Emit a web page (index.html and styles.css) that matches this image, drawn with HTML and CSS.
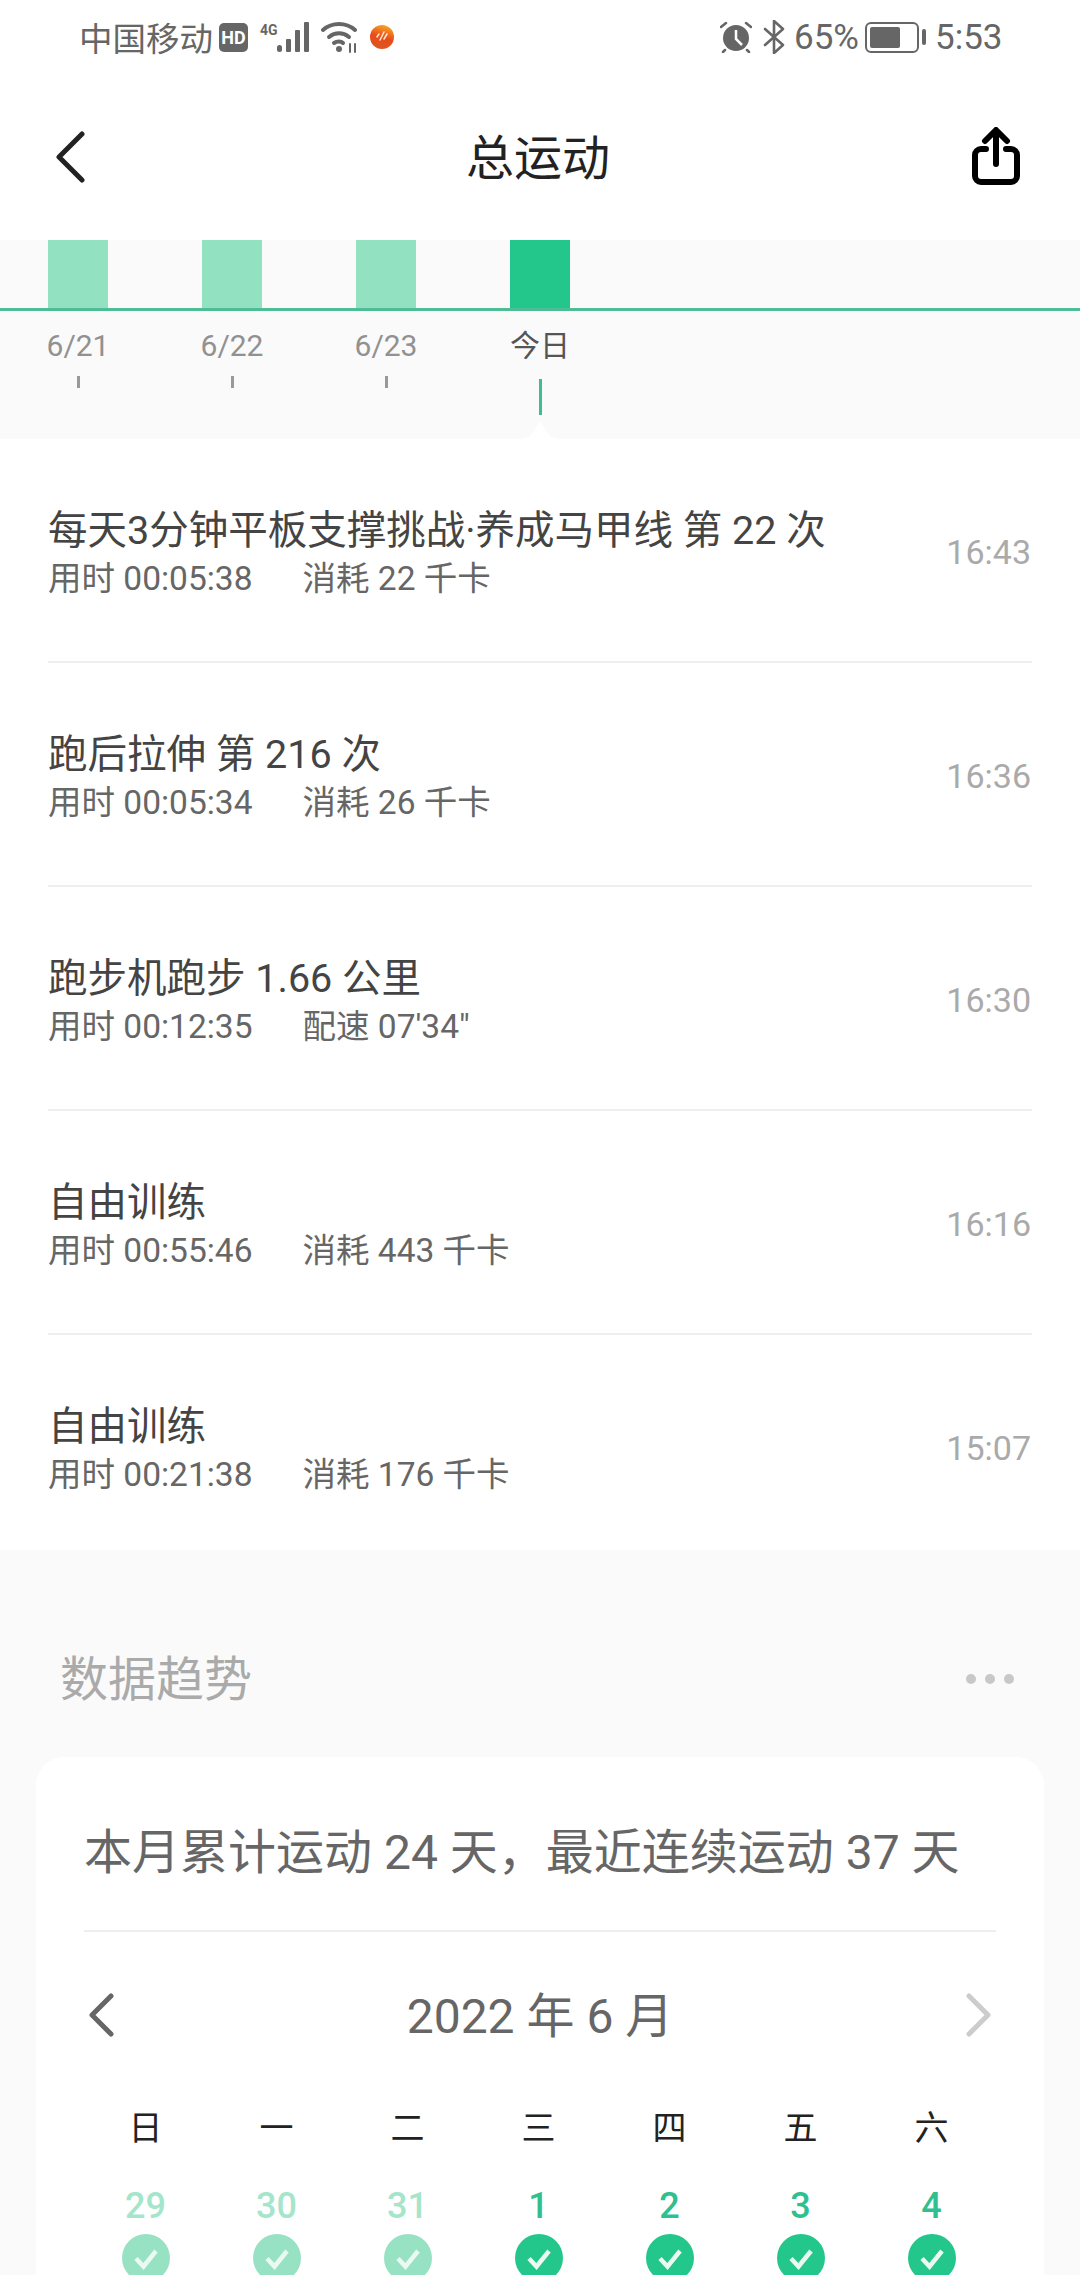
FILE: index.html
```html
<!DOCTYPE html>
<html>
<head>
    <meta charset="utf-8">
    <title>总运动</title>
    <link rel="stylesheet" href="styles.css">
</head>
<body>
    <svg class="defs" width="0" height="0">
        <symbol id="tick" viewBox="0 0 48 48">
            <circle cx="24" cy="24" r="24" fill="currentColor"/>
            <path d="M14 24.5l7.5 8L34 17" fill="none" stroke="#eafaf3" stroke-width="4.5"/>
        </symbol>
    </svg>

    <div class="status-bar">
        <span class="carrier">中国移动</span>
        <span class="hd">HD</span>
        <span class="net">4G</span>
        <svg class="signal" width="33" height="30" viewBox="0 0 33 30" fill="#666">
            <rect x="0" y="23" width="5" height="7" rx="2.5"/>
            <rect x="9" y="17" width="5" height="13" rx="1"/>
            <rect x="18" y="8" width="5" height="22" rx="1"/>
            <rect x="27" y="0" width="5" height="30" rx="1"/>
        </svg>
        <svg class="wifi" width="37" height="32" viewBox="0 0 37 32" fill="none" stroke="#666" stroke-width="4" stroke-linecap="round">
            <path d="M2 9C11 1 25 1 34 9"/>
            <path d="M8 16c6-5 14-5 20 0"/>
            <path d="M13 22c3-2 7-2 9 0"/>
            <circle cx="18" cy="28" r="3" fill="#666" stroke="none"/>
            <path d="M29 23v8M34 23v8" stroke-width="2"/>
        </svg>
        <svg class="app-dot" width="24" height="24" viewBox="0 0 24 24">
            <defs>
                <linearGradient id="dot" x1="0.6" y1="0" x2="0.3" y2="1">
                    <stop offset="0" stop-color="#f5a623"/>
                    <stop offset="0.5" stop-color="#ea4a1c"/>
                    <stop offset="1" stop-color="#d9591f"/>
                </linearGradient>
            </defs>
            <circle cx="12" cy="12" r="12" fill="url(#dot)"/>
            <path d="M7 12l2-3M10 15l4-8M14 14l3-5" stroke="#ffe9d0" stroke-width="1.5" stroke-linecap="round"/>
        </svg>
        <span class="status-gap"></span>
        <svg class="alarm" width="32" height="32" viewBox="0 0 32 32">
            <circle cx="16" cy="17" r="13" fill="#666"/>
            <path d="M16 9v9l6 6" fill="none" stroke="#fff" stroke-width="2.5"/>
            <path d="M1 6l5-4M31 6l-5-4M5 29l-2 2M27 29l2 2" stroke="#666" stroke-width="2.5" stroke-linecap="round"/>
        </svg>
        <svg class="bt" width="22" height="34" viewBox="0 0 22 34" fill="none" stroke="#666" stroke-width="2.6" stroke-linejoin="round" stroke-linecap="round">
            <path d="M2 9l18 16-9 8V1l9 8L2 25"/>
        </svg>
        <span class="battery-text">65%</span>
        <span class="battery"><span class="battery-fill"></span></span>
        <span class="battery-cap"></span>
        <span class="clock">5:53</span>
    </div>

    <div class="nav">
        <svg class="back" width="29" height="52" viewBox="0 0 29 52" fill="none" stroke="#222" stroke-width="5" stroke-linecap="round" stroke-linejoin="round">
            <path d="M26 3L3 26l23 23"/>
        </svg>
        <div class="nav-title">总运动</div>
        <svg class="share" width="48" height="58" viewBox="0 0 48 58" fill="none" stroke="#000" stroke-width="6" stroke-linecap="round" stroke-linejoin="round">
            <path d="M24 37V4M13 14L24 3l11 11"/>
            <path d="M14 22H9a6 6 0 0 0-6 6v21a6 6 0 0 0 6 6h30a6 6 0 0 0 6-6V28a6 6 0 0 0-6-6h-5"/>
        </svg>
    </div>

    <div class="chart">
        <div class="bars">
            <div class="bar"></div>
            <div class="bar"></div>
            <div class="bar"></div>
            <div class="bar bar-today"></div>
        </div>
        <div class="days">
            <div class="day"><span>6/21</span><i class="mark"></i></div>
            <div class="day"><span>6/22</span><i class="mark"></i></div>
            <div class="day"><span>6/23</span><i class="mark"></i></div>
            <div class="day day-today"><span>今日</span><i class="mark"></i></div>
        </div>
        <svg class="notch" width="44" height="18" viewBox="0 0 44 18">
            <path d="M0 18c8 0 12-2 16-9l6-9 6 9c4 7 8 9 16 9z" fill="#fff"/>
        </svg>
    </div>

    <div class="list">
        <div class="row">
            <div class="row-text">
                <div class="row-title">每天3分钟平板支撑挑战·养成马甲线 第 22 次</div>
                <div class="row-sub"><span>用时 00:05:38</span><span>消耗 22 千卡</span></div>
            </div>
            <div class="row-time">16:43</div>
        </div>
        <div class="row">
            <div class="row-text">
                <div class="row-title">跑后拉伸 第 216 次</div>
                <div class="row-sub"><span>用时 00:05:34</span><span>消耗 26 千卡</span></div>
            </div>
            <div class="row-time">16:36</div>
        </div>
        <div class="row">
            <div class="row-text">
                <div class="row-title">跑步机跑步 1.66 公里</div>
                <div class="row-sub"><span>用时 00:12:35</span><span>配速 07'34"</span></div>
            </div>
            <div class="row-time">16:30</div>
        </div>
        <div class="row">
            <div class="row-text">
                <div class="row-title">自由训练</div>
                <div class="row-sub"><span>用时 00:55:46</span><span>消耗 443 千卡</span></div>
            </div>
            <div class="row-time">16:16</div>
        </div>
        <div class="row">
            <div class="row-text">
                <div class="row-title">自由训练</div>
                <div class="row-sub"><span>用时 00:21:38</span><span>消耗 176 千卡</span></div>
            </div>
            <div class="row-time">15:07</div>
        </div>
    </div>

    <div class="trend">
        <div class="trend-head">
            <div class="trend-title">数据趋势</div>
            <div class="more"><i></i><i></i><i></i></div>
        </div>
        <div class="card">
            <div class="card-title">本月累计运动 24 天，最近连续运动 37 天</div>
            <div class="month">
                <svg width="26" height="44" viewBox="0 0 26 44" fill="none" stroke="#666" stroke-width="5" stroke-linecap="round" stroke-linejoin="round">
                    <path d="M23 3L4 22l19 19"/>
                </svg>
                <div class="month-name">2022 年 6 月</div>
                <svg width="26" height="44" viewBox="0 0 26 44" fill="none" stroke="#ccc" stroke-width="5" stroke-linecap="round" stroke-linejoin="round">
                    <path d="M3 3l19 19L3 41"/>
                </svg>
            </div>
            <div class="calendar">
                <div class="weekday">日</div>
                <div class="weekday">一</div>
                <div class="weekday">二</div>
                <div class="weekday">三</div>
                <div class="weekday">四</div>
                <div class="weekday">五</div>
                <div class="weekday">六</div>
                <div class="date date-old">29<svg><use href="#tick"/></svg></div>
                <div class="date date-old">30<svg><use href="#tick"/></svg></div>
                <div class="date date-old">31<svg><use href="#tick"/></svg></div>
                <div class="date">1<svg><use href="#tick"/></svg></div>
                <div class="date">2<svg><use href="#tick"/></svg></div>
                <div class="date">3<svg><use href="#tick"/></svg></div>
                <div class="date">4<svg><use href="#tick"/></svg></div>
            </div>
        </div>
    </div>
</body>
</html>
```

FILE: styles.css
```css
html, body {
    margin: 0;
    height: 2275px;
    overflow: hidden;
}
body {
    width: 1080px;
    background-color: #fff;
    font-family: Roboto, "Noto Sans CJK SC", sans-serif;
    color: #333;
}
.defs {
    position: absolute;
}

/* status bar */
.status-bar {
    height: 74px;
    padding-left: 79px;
    display: flex;
    align-items: center;
    color: #666;
    font-size: 35px;
}
.carrier {
    width: 140px;
    margin-top: -2px;
    font-size: 33.5px;
}
.hd {
    width: 29px;
    height: 29px;
    border-radius: 5px;
    background-color: #666;
    color: #fff;
    font-size: 18px;
    font-weight: 700;
    line-height: 29px;
    text-align: center;
}
.net {
    width: 28px;
    margin: -14px 0 0 12px;
    font-size: 14px;
    font-weight: 700;
}
.signal {
    margin-left: -11px;
}
.wifi {
    margin-left: 11px;
}
.app-dot {
    margin-left: 12px;
}
.status-gap {
    width: 326px;
}
.bt {
    margin-left: 11px;
}
.battery-text {
    width: 64px;
    margin-left: 9px;
}
.battery {
    width: 44px;
    height: 21px;
    margin-left: 7px;
    padding: 3px;
    border: 2px solid #666;
    border-radius: 6px;
}
.battery-fill {
    display: block;
    width: 30px;
    height: 21px;
    border-radius: 2px;
    background-color: #666;
}
.battery-cap {
    width: 4px;
    height: 16px;
    margin-left: 3px;
    border-radius: 2px;
    background-color: #666;
}
.clock {
    margin-left: 9px;
}

/* title row */
.nav {
    height: 166px;
    display: grid;
    grid-template-columns: 1fr auto 1fr;
    align-items: center;
    padding: 0 60px 0 56px;
}
.nav-title {
    margin-top: -6px;
    font-size: 48px;
    color: #222;
}
.share {
    justify-self: end;
    margin-top: -2px;
}

/* bars */
.chart {
    height: 199px;
    background-color: #fafafa;
    position: relative;
}
.bars {
    height: 68px;
    padding-left: 48px;
    display: flex;
    gap: 94px;
    border-bottom: 3px solid #4dbd96;
}
.bar {
    width: 60px;
    background-color: #92e1c1;
}
.bar-today {
    background-color: #23c68b;
}
.days {
    padding-left: 48px;
    display: flex;
    gap: 94px;
}
.day {
    width: 60px;
    display: flex;
    flex-direction: column;
    align-items: center;
    font-size: 30px;
    color: #919191;
}
.day span {
    height: 36px;
    margin-top: 17px;
    line-height: 36px;
    white-space: nowrap;
}
.mark {
    width: 3px;
    height: 12px;
    margin-top: 12px;
    background-color: #999;
}
.day-today {
    color: #555;
}
.day-today .mark {
    height: 36px;
    margin-top: 15px;
    background-color: #3dbd90;
}
.notch {
    position: absolute;
    left: 518px;
    bottom: 0;
}

/* workouts */
.list {
    height: 1111px;
    overflow: hidden;
}
.row {
    height: 224px;
    margin: 0 48px;
    box-sizing: border-box;
    border-bottom: 2px solid #eee;
    display: flex;
    align-items: center;
    justify-content: space-between;
}
.row-text {
    margin-top: 8px;
}
.row-title {
    font-size: 39.5px;
    line-height: 50px;
    color: #444;
}
.row-sub {
    display: flex;
    gap: 50px;
    font-size: 33.5px;
    line-height: 46px;
    color: #666;
}
.row-time {
    margin: 4px 1px 0 0;
    font-size: 34px;
    color: #aaa;
}

/* trend section */
.trend {
    height: 725px;
    background-color: #fafafa;
    overflow: hidden;
}
.trend-head {
    height: 210px;
    padding: 0 66px 52px 60px;
    margin-bottom: -3px;
    display: flex;
    align-items: flex-end;
    justify-content: space-between;
    box-sizing: border-box;
}
.trend-title {
    font-size: 48px;
    line-height: 56px;
    color: #aaa;
}
.more {
    display: flex;
    gap: 9px;
    margin-bottom: 24px;
}
.more i {
    width: 10px;
    height: 10px;
    border-radius: 50%;
    background-color: #c8c8c8;
}
.card {
    margin: 0 36px;
    padding: 0 48px;
    height: 560px;
    border-radius: 28px;
    background-color: #fff;
}
.card-title {
    height: 175px;
    line-height: 192px;
    box-sizing: border-box;
    border-bottom: 2px solid #eee;
    font-size: 48px;
    color: #666;
    white-space: nowrap;
}
.month {
    height: 166px;
    display: flex;
    align-items: center;
    justify-content: space-between;
    padding: 0 4px;
}
.month-name {
    padding-bottom: 6px;
    font-size: 48px;
    color: #666;
}
.calendar {
    width: 917px;
    margin-left: -4px;
    display: grid;
    grid-template-columns: repeat(7, 131px);
    text-align: center;
}
.weekday {
    height: 60px;
    line-height: 60px;
    font-size: 34px;
    color: #222;
}
.date {
    margin-top: 24px;
    font-size: 36px;
    font-weight: 500;
    line-height: 48px;
    color: #30bf8f;
}
.date svg {
    display: block;
    width: 48px;
    height: 48px;
    margin: 4px auto 0;
    color: #23c68b;
}
.date-old {
    color: #a5e5cb;
}
.date-old svg {
    color: #98e2c4;
}
```
